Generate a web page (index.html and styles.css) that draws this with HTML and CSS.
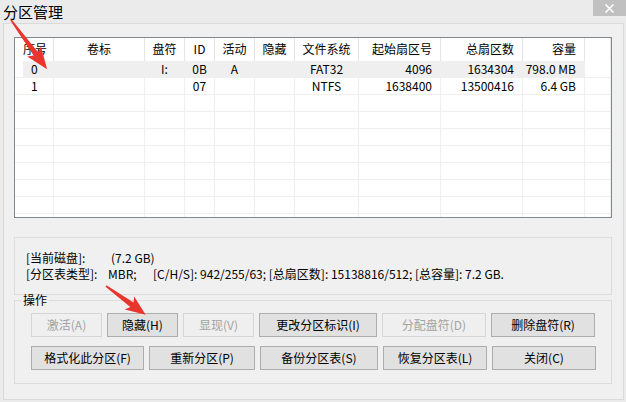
FILE: index.html
```html
<!DOCTYPE html>
<html lang="zh-CN">
<head>
<meta charset="utf-8">
<title>分区管理</title>
<link rel="stylesheet" href="styles.css">
</head>
<body>
<div class="window">
  <div class="titlebar">
    <span class="title">分区管理</span>
    <span class="close"><svg width="11" height="9" viewBox="0 0 11 9"><path d="M1.5 0.5 L9.5 8.5 M9.5 0.5 L1.5 8.5" stroke="#fff" stroke-width="1.6"/></svg></span>
  </div>
  <div class="panel">
    <div class="listbox">
      <div class="row head">
        <div class="cell l">序号</div>
        <div class="cell">卷标</div>
        <div class="cell">盘符</div>
        <div class="cell">ID</div>
        <div class="cell">活动</div>
        <div class="cell">隐藏</div>
        <div class="cell">文件系统</div>
        <div class="cell r">起始扇区号</div>
        <div class="cell r">总扇区数</div>
        <div class="cell r">容量</div>
        <div class="cell"></div>
      </div>
      <div class="row sel">
        <div class="cell no first">0</div>
        <div class="cell"></div>
        <div class="cell">I:</div>
        <div class="cell">0B</div>
        <div class="cell">A</div>
        <div class="cell"></div>
        <div class="cell">FAT32</div>
        <div class="cell r">4096</div>
        <div class="cell r">1634304</div>
        <div class="cell r">798.0 MB</div>
        <div class="cell filler"></div>
      </div>
      <div class="row">
        <div class="cell no">1</div>
        <div class="cell"></div>
        <div class="cell"></div>
        <div class="cell">07</div>
        <div class="cell"></div>
        <div class="cell"></div>
        <div class="cell">NTFS</div>
        <div class="cell r">1638400</div>
        <div class="cell r">13500416</div>
        <div class="cell r">6.4 GB</div>
        <div class="cell"></div>
      </div>
      <div class="row"><div class="cell"></div><div class="cell"></div><div class="cell"></div><div class="cell"></div><div class="cell"></div><div class="cell"></div><div class="cell"></div><div class="cell"></div><div class="cell"></div><div class="cell"></div><div class="cell"></div></div>
      <div class="row"><div class="cell"></div><div class="cell"></div><div class="cell"></div><div class="cell"></div><div class="cell"></div><div class="cell"></div><div class="cell"></div><div class="cell"></div><div class="cell"></div><div class="cell"></div><div class="cell"></div></div>
      <div class="row"><div class="cell"></div><div class="cell"></div><div class="cell"></div><div class="cell"></div><div class="cell"></div><div class="cell"></div><div class="cell"></div><div class="cell"></div><div class="cell"></div><div class="cell"></div><div class="cell"></div></div>
      <div class="row"><div class="cell"></div><div class="cell"></div><div class="cell"></div><div class="cell"></div><div class="cell"></div><div class="cell"></div><div class="cell"></div><div class="cell"></div><div class="cell"></div><div class="cell"></div><div class="cell"></div></div>
      <div class="row"><div class="cell"></div><div class="cell"></div><div class="cell"></div><div class="cell"></div><div class="cell"></div><div class="cell"></div><div class="cell"></div><div class="cell"></div><div class="cell"></div><div class="cell"></div><div class="cell"></div></div>
      <div class="row"><div class="cell"></div><div class="cell"></div><div class="cell"></div><div class="cell"></div><div class="cell"></div><div class="cell"></div><div class="cell"></div><div class="cell"></div><div class="cell"></div><div class="cell"></div><div class="cell"></div></div>
      <div class="row"><div class="cell"></div><div class="cell"></div><div class="cell"></div><div class="cell"></div><div class="cell"></div><div class="cell"></div><div class="cell"></div><div class="cell"></div><div class="cell"></div><div class="cell"></div><div class="cell"></div></div>
      <div class="row"><div class="cell"></div><div class="cell"></div><div class="cell"></div><div class="cell"></div><div class="cell"></div><div class="cell"></div><div class="cell"></div><div class="cell"></div><div class="cell"></div><div class="cell"></div><div class="cell"></div></div>
    </div>

    <div class="info">
      <div class="line"><span class="lbl1">[当前磁盘]:</span><span>(7.2 GB)</span></div>
      <div class="line"><span class="lbl2">[分区表类型]:</span><span class="mbr">MBR;</span><span>[C/H/S]: 942/255/63; [总扇区数]: 15138816/512; [总容量]: 7.2 GB.</span></div>
    </div>

    <fieldset class="ops">
      <legend>操作</legend>
      <div class="btn-row">
        <button class="btn w71" disabled>激活(A)</button>
        <button class="btn w71">隐藏(H)</button>
        <button class="btn w71" disabled>显现(V)</button>
        <button class="btn w118">更改分区标识(I)</button>
        <button class="btn w104" disabled>分配盘符(D)</button>
        <button class="btn w104">删除盘符(R)</button>
      </div>
      <div class="btn-row second">
        <button class="btn w113">格式化此分区(F)</button>
        <button class="btn w106">重新分区(P)</button>
        <button class="btn w118">备份分区表(S)</button>
        <button class="btn w104">恢复分区表(L)</button>
        <button class="btn w104">关闭(C)</button>
      </div>
    </fieldset>
  </div>

  <svg class="annot" width="626" height="402" viewBox="0 0 626 402">
    <polygon fill="#e8352e" transform="translate(11,20) rotate(53.7)" points="0,-0.8 42,-2.8 39,-8.5 61,0 39,8.5 42,2.8 0,0.8"/>
    <polygon fill="#e8352e" transform="translate(106,286) rotate(35.9)" points="0,-0.8 32,-2.8 29,-8 49,0 29,8 32,2.8 0,0.8"/>
  </svg>
</div>
</body>
</html>
```

FILE: styles.css
```css
* { box-sizing: border-box; }

html, body {
  margin: 0;
  padding: 0;
}

body {
  width: 626px;
  height: 402px;
  overflow: hidden;
  background: #ebebeb;
  font-family: "Noto Sans CJK SC", "Noto Sans", sans-serif;
  font-size: 12px;
  color: #000;
}

.window {
  position: relative;
  width: 626px;
  height: 402px;
}

.titlebar {
  height: 23px;
  display: flex;
  justify-content: space-between;
  align-items: flex-start;
}

.title {
  font-size: 15px;
  line-height: 23px;
  padding-left: 3px;
}

.close {
  width: 33px;
  height: 16px;
  background: #c0c0c0;
  display: flex;
  align-items: center;
  justify-content: center;
}

.panel {
  margin-left: 3px;
  width: 621px;
  height: 377px;
  border: 1px solid #dadada;
  background: #f0f0f0;
  padding: 13px 0 0 10px;
}

.listbox {
  width: 598px;
  height: 181px;
  border: 1px solid #828790;
  background: #fff;
  overflow: hidden;
}

.row {
  display: grid;
  grid-template-columns: 39px 91px 40px 30px 40px 40px 64px 82px 82px 62px 26px;
  height: 17px;
  border-bottom: 1px solid #efefef;
  line-height: 16px;
}

.row .cell {
  border-right: 1px solid #efefef;
  text-align: center;
  white-space: nowrap;
  overflow: hidden;
}

.row.head {
  height: 23px;
  line-height: 22px;
  border-bottom: none;
}

.row.head .cell {
  border-right-color: #e5e5e5;
}

.row .cell.l { text-align: left; padding-left: 8px; }
.row .cell.r { text-align: right; padding-right: 8px; }
.row .cell.no { text-align: left; padding-left: 16px; }

.row.sel {
  border-bottom-color: #efefef;
}

.row.sel .cell {
  background: #efefef;
  border-right-color: #efefef;
}

.row.sel .cell.first {
  background: linear-gradient(to right, #fff 8px, #efefef 8px);
}

.row.sel .cell.filler {
  background: #fff;
  border-right-color: #efefef;
}

.info {
  margin-top: 19px;
  width: 598px;
  height: 58px;
  border: 1px solid #dcdcdc;
  padding: 12px 10px 0 11px;
  line-height: 16px;
}

.line { white-space: nowrap; }

.lbl1 { display: inline-block; width: 85px; }
.lbl2 { display: inline-block; width: 82px; }
.mbr { display: inline-block; width: 45px; }

.ops {
  margin: -1px 0 0 0;
  width: 598px;
  border: 1px solid #dcdcdc;
  padding: 7px 0 13px 16px;
  min-width: 0;
}

.ops legend {
  font-size: 12px;
  line-height: 12px;
  padding: 0 2px;
  margin-left: -10px;
}

.btn-row {
  display: flex;
  gap: 5px;
}

.btn-row.second { margin-top: 9px; }

.btn {
  height: 24px;
  padding: 0;
  font-family: "Noto Sans CJK SC", "Noto Sans", sans-serif;
  font-size: 12px;
  line-height: 16px;
  color: #000;
  background: #e1e1e1;
  border: 1px solid #adadad;
  border-radius: 0;
}

.btn:disabled {
  background: #efefef;
  border-color: #d5d5d5;
  color: #a3a3a3;
}

.w71 { width: 71px; }
.w104 { width: 104px; }
.w106 { width: 106px; }
.w113 { width: 113px; }
.w118 { width: 118px; }

.annot {
  position: absolute;
  left: 0;
  top: 0;
  pointer-events: none;
}
```
